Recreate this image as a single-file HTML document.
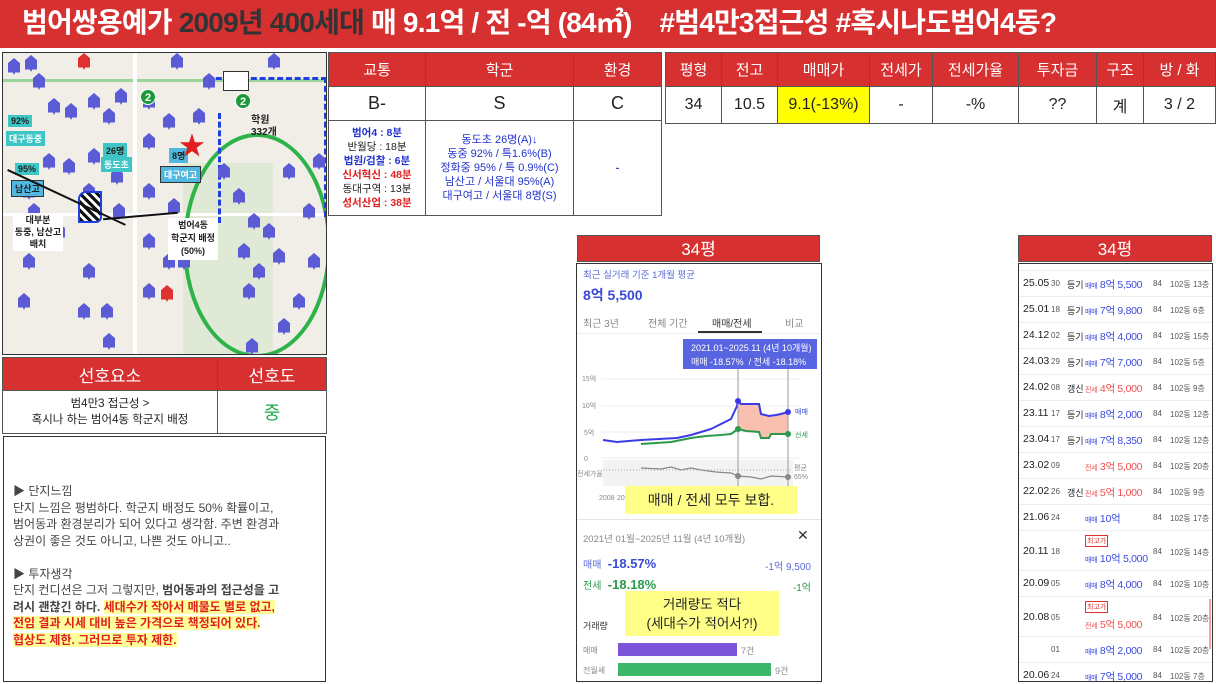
<!DOCTYPE html>
<html><head><meta charset="utf-8">
<style>
*{margin:0;padding:0;box-sizing:border-box}
body{width:1216px;height:684px;background:#fff;position:relative;overflow:hidden;font-family:"Liberation Sans","Noto Sans CJK KR",sans-serif;color:#222}
.a{position:absolute}
.hdr{left:0;top:0;width:1216px;height:48px;background:#d63031;color:#fff;font-weight:bold;font-size:28px;line-height:46px;padding-left:22px;letter-spacing:-0.8px;white-space:nowrap}
.red{background:#d63031;color:#fff;text-align:center}
table{border-collapse:collapse;position:absolute}
td{border:1px solid #555;text-align:center}
.mk{position:absolute;width:12px;height:17px;background:#5b5bd6;clip-path:polygon(0 30%,50% 0,100% 30%,100% 85%,60% 85%,50% 100%,40% 85%,0 85%)}
.lbl{position:absolute;font-size:9px;font-weight:bold;padding:1px 3px}
.rw{position:absolute;left:0;width:194px;border-top:1px solid #eee;font-size:10.5px;white-space:nowrap}
.rw span{position:absolute;white-space:nowrap}
.rw .p{font-size:10.5px;letter-spacing:-0.3px}
.rw .p small{font-size:7px}
.rw .n{font-size:8px;color:#555}
</style></head><body>
<div class="a hdr">범어쌍용예가 <span style="color:#333">2009년 400세대</span> 매 9.1억 / 전 -억 (84㎡) &nbsp;&nbsp;&nbsp;#범4만3접근성 #혹시나도범어4동?</div>

<div class="a" style="left:2px;top:52px;width:325px;height:303px;background:#f1eee8;border:1px solid #333;overflow:hidden">
<div class="a" style="left:180px;top:110px;width:90px;height:193px;background:#dfe9d5"></div>
<div class="a" style="left:0;top:26px;width:325px;height:3px;background:#9bd39b"></div>
<div class="a" style="left:130px;top:0;width:4px;height:303px;background:#fff"></div>
<div class="a" style="left:0;top:160px;width:325px;height:3px;background:#fff"></div>
<div class="a" style="left:180px;top:80px;width:148px;height:225px;border:4px solid #2db34a;border-radius:50%"></div>
<div class="a" style="left:204px;top:24px;width:120px;height:140px;border-top:3px dashed #1f3fe0;border-right:3px dashed #1f3fe0"></div>
<div class="a" style="left:215px;top:60px;width:70px;height:110px;border-left:3px dashed #1f3fe0"></div>
<div class="mk" style="left:5px;top:5px"></div><div class="mk" style="left:22px;top:2px"></div><div class="mk" style="left:30px;top:20px"></div><div class="mk" style="left:45px;top:45px"></div><div class="mk" style="left:62px;top:50px"></div><div class="mk" style="left:85px;top:40px"></div><div class="mk" style="left:100px;top:55px"></div><div class="mk" style="left:112px;top:35px"></div><div class="mk" style="left:140px;top:40px"></div><div class="mk" style="left:160px;top:60px"></div><div class="mk" style="left:190px;top:55px"></div><div class="mk" style="left:200px;top:20px"></div><div class="mk" style="left:265px;top:0"></div><div class="mk" style="left:168px;top:0"></div><div class="mk" style="left:40px;top:100px"></div><div class="mk" style="left:60px;top:105px"></div><div class="mk" style="left:85px;top:95px"></div><div class="mk" style="left:140px;top:80px"></div><div class="mk" style="left:108px;top:115px"></div><div class="mk" style="left:140px;top:130px"></div><div class="mk" style="left:20px;top:130px"></div><div class="mk" style="left:80px;top:130px"></div><div class="mk" style="left:25px;top:150px"></div><div class="mk" style="left:50px;top:170px"></div><div class="mk" style="left:110px;top:150px"></div><div class="mk" style="left:165px;top:145px"></div><div class="mk" style="left:230px;top:135px"></div><div class="mk" style="left:245px;top:160px"></div><div class="mk" style="left:280px;top:110px"></div><div class="mk" style="left:300px;top:150px"></div><div class="mk" style="left:310px;top:100px"></div><div class="mk" style="left:260px;top:170px"></div><div class="mk" style="left:270px;top:195px"></div><div class="mk" style="left:235px;top:190px"></div><div class="mk" style="left:140px;top:180px"></div><div class="mk" style="left:160px;top:200px"></div><div class="mk" style="left:140px;top:230px"></div><div class="mk" style="left:80px;top:210px"></div><div class="mk" style="left:75px;top:250px"></div><div class="mk" style="left:98px;top:250px"></div><div class="mk" style="left:100px;top:280px"></div><div class="mk" style="left:20px;top:200px"></div><div class="mk" style="left:15px;top:240px"></div><div class="mk" style="left:175px;top:200px"></div><div class="mk" style="left:240px;top:230px"></div><div class="mk" style="left:250px;top:210px"></div><div class="mk" style="left:290px;top:240px"></div><div class="mk" style="left:275px;top:265px"></div><div class="mk" style="left:243px;top:285px"></div><div class="mk" style="left:305px;top:200px"></div><div class="mk" style="left:195px;top:170px"></div><div class="mk" style="left:215px;top:110px"></div>
<div class="mk" style="left:158px;top:232px;background:#e03030"></div><div class="mk" style="left:75px;top:0;background:#e03030"></div>
<div class="lbl" style="left:5px;top:62px;background:#3ec6c6;color:#222">92%</div>
<div class="lbl" style="left:3px;top:78px;background:#3ec6c6;color:#fff">대구동중</div>
<div class="lbl" style="left:12px;top:110px;background:#3ec6c6;color:#222">95%</div>
<div class="lbl" style="left:8px;top:127px;background:#4fb7e0;color:#222;border:1px solid #333">남산고</div>
<div class="lbl" style="left:100px;top:90px;background:#3ec6c6;color:#222">26명</div>
<div class="lbl" style="left:98px;top:104px;background:#3ec6c6;color:#fff">동도초</div>
<div class="lbl" style="left:166px;top:95px;background:#4fb7e0;color:#222">8명</div>
<div class="lbl" style="left:157px;top:113px;background:#4fb7e0;color:#fff;border:1px solid #333">대구여고</div>
<div class="a" style="left:176px;top:80px;color:#e02020;font-size:26px;line-height:26px">★</div>
<div class="a" style="left:137px;top:36px;width:16px;height:16px;border-radius:50%;background:#1a9a3a;color:#fff;font-size:11px;font-weight:bold;text-align:center;line-height:16px;border:1px solid #fff">2</div>
<div class="a" style="left:232px;top:40px;width:16px;height:16px;border-radius:50%;background:#1a9a3a;color:#fff;font-size:11px;font-weight:bold;text-align:center;line-height:16px;border:1px solid #fff">2</div>
<div class="a" style="left:220px;top:18px;width:26px;height:20px;background:#fff;border:1px solid #333"></div>
<div class="a" style="left:248px;top:62px;font-size:10px;font-weight:bold;color:#222;line-height:12px">학원<br>332개</div>
<div class="a" style="left:75px;top:138px;width:24px;height:32px;background:repeating-linear-gradient(45deg,#111 0 3px,#fff 3px 6px);border:2px solid #1f3fe0;border-radius:8px 0 6px 0"></div>
<div class="a" style="left:5px;top:116px;width:130px;height:2px;background:#111;transform:rotate(25deg);transform-origin:0 0"></div>
<div class="a" style="left:100px;top:162px;width:75px;height:2px;background:#111;transform:rotate(-5deg)"></div>
<div class="a" style="left:10px;top:160px;width:50px;height:38px;background:#fff;font-size:9px;font-weight:bold;text-align:center;line-height:12px;padding-top:1px">대부분<br>동중, 남산고<br>배치</div>
<div class="a" style="left:165px;top:165px;width:50px;height:42px;background:#fff;font-size:9px;font-weight:bold;text-align:center;line-height:13px;padding-top:1px">범어4동<br>학군지 배정<br>(50%)</div>
</div>

<table style="left:328px;top:52px;width:334px">
<tr style="height:34px"><td class="red" style="width:97px;font-size:15px">교통</td><td class="red" style="width:148px;font-size:15px">학군</td><td class="red" style="font-size:15px">환경</td></tr>
<tr style="height:34px;font-size:18px"><td>B-</td><td>S</td><td>C</td></tr>
<tr style="height:95px;font-size:10.5px;line-height:14px;font-weight:bold"><td><span style="color:#2233cc">범어4 : 8분</span><br><span style="font-weight:normal">반월당 : 18분</span><br><span style="color:#2233cc">법원/검찰 : 6분</span><br><span style="color:#e02020">신서혁신 : 48분</span><br><span style="font-weight:normal">동대구역 : 13분</span><br><span style="color:#e02020">성서산업 : 38분</span></td>
<td style="color:#2233cc;font-weight:normal;font-size:11px">동도초 26명(A)↓<br>동중 92% / 특1.6%(B)<br>정화중 95% / 특 0.9%(C)<br>남산고 / 서울대 95%(A)<br>대구여고 / 서울대 8명(S)</td><td style="color:#2233cc">-</td></tr>
</table>

<table style="left:665px;top:52px;width:551px">
<tr style="height:34px;font-size:15px"><td class="red" style="width:56px">평형</td><td class="red" style="width:56px">전고</td><td class="red" style="width:92px">매매가</td><td class="red" style="width:63px">전세가</td><td class="red" style="width:86px">전세가율</td><td class="red" style="width:78px">투자금</td><td class="red" style="width:47px">구조</td><td class="red">방 / 화</td></tr>
<tr style="height:37px;font-size:16px"><td>34</td><td>10.5</td><td style="background:#ffff00">9.1(-13%)</td><td>-</td><td>-%</td><td>??</td><td>계</td><td>3 / 2</td></tr>
</table>

<table style="left:2px;top:357px;width:325px">
<tr style="height:33px;font-size:17px"><td class="red" style="width:215px">선호요소</td><td class="red">선호도</td></tr>
<tr style="height:43px"><td style="font-size:11.5px;line-height:16px">범4만3 접근성 &gt;<br>혹시나 하는 범어4동 학군지 배정</td><td style="color:#1fa84a;font-size:18px">중</td></tr>
</table>
<div class="a" style="left:3px;top:436px;width:323px;height:246px;border:1px solid #333;font-size:12px;line-height:16.5px;color:#444;padding:46px 0 0 9px">
▶ 단지느낌<br>단지 느낌은 평범하다. 학군지 배정도 50% 확률이고,<br>범어동과 환경분리가 되어 있다고 생각함. 주변 환경과<br>상권이 좋은 것도 아니고, 나쁜 것도 아니고..<br><br>▶ 투자생각<br>단지 컨디션은 그저 그렇지만, <b>범어동과의 접근성을 고<br>려시 괜찮긴 하다.</b> <b style="color:#e02020;background:#ffff99">세대수가 작아서 매물도 별로 없고,</b><br><b style="color:#e02020;background:#ffff99">전임 결과 시세 대비 높은 가격으로 책정되어 있다.</b><br><b style="color:#e02020;background:#ffff99">협상도 제한. 그러므로 투자 제한.</b>
</div>

<div class="a red" style="left:577px;top:235px;width:243px;height:27px;font-size:17px;line-height:27px;border:1px solid #555">34평</div>
<div class="a" style="left:576px;top:263px;width:246px;height:419px;border:1px solid #333;overflow:hidden">
<div class="a" style="left:6px;top:3px;font-size:9.5px;color:#5a6bd6">최근 실거래 기준 1개월 평균</div>
<div class="a" style="left:6px;top:21px;font-size:14px;font-weight:bold;color:#3a4bd8">8억 5,500</div>
<div class="a" style="left:6px;top:51px;font-size:10px;color:#888;width:235px"><span class="a" style="left:0">최근 3년</span><span class="a" style="left:65px">전체 기간</span><span class="a" style="left:129px;color:#333">매매/전세</span><span class="a" style="left:202px">비교</span></div>
<div class="a" style="left:121px;top:67px;width:64px;height:2px;background:#333"></div>
<div class="a" style="left:0;top:69px;width:246px;height:1px;background:#eee"></div>
<div class="a" style="left:106px;top:75px;width:134px;height:30px;background:#5865e0;color:#fff;font-size:9px;line-height:14px;padding:2px 0 0 8px">2021.01~2025.11 (4년 10개월)<br>매매 -18.57% &nbsp;/ 전세 -18.18%</div>
<svg class="a" style="left:0;top:0" width="246" height="419" viewBox="576 263 246 419">
<g font-size="7" fill="#888" font-family="Liberation Sans,Noto Sans CJK KR,sans-serif"><text x="581" y="380">15억</text><text x="581" y="407">10억</text><text x="583" y="434">5억</text><text x="583" y="460">0</text><text x="576" y="475">전세가율</text><text x="794" y="413" fill="#3a4bd8">매매</text><text x="794" y="436" fill="#2a9a4a">전세</text><text x="793" y="469">평균</text><text x="793" y="478">65%</text><text x="598" y="499">2008</text><text x="616" y="499">2010</text></g>
<g stroke="#eee"><line x1="600" y1="378" x2="800" y2="378"/><line x1="600" y1="405" x2="800" y2="405"/><line x1="600" y1="431" x2="800" y2="431"/><line x1="600" y1="457" x2="800" y2="457"/></g>
<rect x="602" y="459" width="190" height="26" fill="#f3f3f3"/>
<polygon points="737,400 740,403 758,403 760,413 768,415 775,414 787,411 787,433 770,433 768,437 760,437 758,431 745,430 737,428" fill="#f9c0b0"/>
<polyline points="602,439 616,441 640,439 676,437 690,434 700,431 710,428 720,423 730,418 736,405 737,400 740,403 758,403 760,413 768,415 775,414 780,413 787,411" fill="none" stroke="#3a3ae8" stroke-width="2"/>
<polyline points="640,443 670,441 690,437 705,435 720,434 730,433 737,428 745,430 758,431 760,437 768,437 770,433 787,433" fill="none" stroke="#2a9a4a" stroke-width="2"/>
<polyline points="640,467 660,468 670,466 680,469 690,467 700,469 715,471 730,472 737,475 750,476 760,478 770,475 787,476" fill="none" stroke="#888" stroke-width="1.2"/>
<line x1="602" y1="469" x2="790" y2="469" stroke="#aaa" stroke-dasharray="1,2"/>
<g stroke="#999"><line x1="737" y1="368" x2="737" y2="487"/><line x1="787" y1="368" x2="787" y2="487"/></g>
<circle cx="737" cy="400" r="3" fill="#3a3ae8"/><circle cx="787" cy="411" r="3" fill="#3a3ae8"/><circle cx="737" cy="428" r="3" fill="#2a9a4a"/><circle cx="787" cy="433" r="3" fill="#2a9a4a"/><circle cx="737" cy="475" r="3" fill="#888"/><circle cx="787" cy="476" r="3" fill="#888"/>
</svg>
<div class="a" style="left:48px;top:222px;width:172px;height:28px;background:#ffff88;font-size:14px;line-height:28px;text-align:center">매매 / 전세 모두 보합.</div>
<div class="a" style="left:0;top:255px;width:246px;height:1px;background:#e4e4e4"></div>
<div class="a" style="left:6px;top:267px;font-size:9.5px;color:#888">2021년 01월~2025년 11월 (4년 10개월)</div>
<div class="a" style="left:220px;top:263px;font-size:14px;color:#333">✕</div>
<div class="a" style="left:6px;top:292px;font-size:10px;color:#5a6bd6">매매 <b style="font-size:13px;color:#3a4bd8">&nbsp;-18.57%</b></div>
<div class="a" style="right:10px;top:294px;font-size:10px;color:#5a6bd6">-1억 9,500</div>
<div class="a" style="left:6px;top:313px;font-size:10px;color:#2a9a4a">전세 <b style="font-size:13px">&nbsp;-18.18%</b></div>
<div class="a" style="right:10px;top:315px;font-size:10px;color:#2a9a4a">-1억</div>
<div class="a" style="left:48px;top:327px;width:154px;height:45px;background:#ffff88;font-size:13.5px;line-height:19px;text-align:center;padding-top:4px">거래량도 적다<br>(세대수가 적어서?!)</div>
<div class="a" style="left:6px;top:355px;font-size:9px;color:#333">거래량</div>
<div class="a" style="left:6px;top:381px;font-size:8px;color:#888">매매</div>
<div class="a" style="left:41px;top:379px;width:119px;height:13px;background:#7b55d9"></div>
<div class="a" style="left:164px;top:380px;font-size:9px;color:#888">7건</div>
<div class="a" style="left:6px;top:401px;font-size:8px;color:#888">전월세</div>
<div class="a" style="left:41px;top:399px;width:153px;height:13px;background:#3db86a"></div>
<div class="a" style="left:198px;top:400px;font-size:9px;color:#888">9건</div>
</div>

<div class="a red" style="left:1018px;top:235px;width:194px;height:27px;font-size:17px;line-height:27px;border:1px solid #555">34평</div>
<div class="a" style="left:1018px;top:263px;width:195px;height:419px;border:1px solid #333;overflow:hidden">
<div class="rw" style="top:6px;height:26px"><span style="left:4px;top:6px">25.05</span><span class="n" style="left:32px;top:8px">30</span><span style="left:48px;top:7px;font-size:9px">등기</span><span class="p" style="left:66px;top:6px;color:#3a4be0"><small>매매</small> 8억 5,500</span><span class="n" style="left:134px;top:8px">84</span><span class="n" style="left:151px;top:8px">102동</span><span class="n" style="left:174px;top:8px">13층</span></div>
<div class="rw" style="top:32px;height:26px"><span style="left:4px;top:6px">25.01</span><span class="n" style="left:32px;top:8px">18</span><span style="left:48px;top:7px;font-size:9px">등기</span><span class="p" style="left:66px;top:6px;color:#3a4be0"><small>매매</small> 7억 9,800</span><span class="n" style="left:134px;top:8px">84</span><span class="n" style="left:151px;top:8px">102동</span><span class="n" style="left:174px;top:8px">6층</span></div>
<div class="rw" style="top:58px;height:26px"><span style="left:4px;top:6px">24.12</span><span class="n" style="left:32px;top:8px">02</span><span style="left:48px;top:7px;font-size:9px">등기</span><span class="p" style="left:66px;top:6px;color:#3a4be0"><small>매매</small> 8억 4,000</span><span class="n" style="left:134px;top:8px">84</span><span class="n" style="left:151px;top:8px">102동</span><span class="n" style="left:174px;top:8px">15층</span></div>
<div class="rw" style="top:84px;height:26px"><span style="left:4px;top:6px">24.03</span><span class="n" style="left:32px;top:8px">29</span><span style="left:48px;top:7px;font-size:9px">등기</span><span class="p" style="left:66px;top:6px;color:#3a4be0"><small>매매</small> 7억 7,000</span><span class="n" style="left:134px;top:8px">84</span><span class="n" style="left:151px;top:8px">102동</span><span class="n" style="left:174px;top:8px">5층</span></div>
<div class="rw" style="top:110px;height:26px"><span style="left:4px;top:6px">24.02</span><span class="n" style="left:32px;top:8px">08</span><span style="left:48px;top:7px;font-size:9px">갱신</span><span class="p" style="left:66px;top:6px;color:#f05050"><small>전세</small> 4억 5,000</span><span class="n" style="left:134px;top:8px">84</span><span class="n" style="left:151px;top:8px">102동</span><span class="n" style="left:174px;top:8px">9층</span></div>
<div class="rw" style="top:136px;height:26px"><span style="left:4px;top:6px">23.11</span><span class="n" style="left:32px;top:8px">17</span><span style="left:48px;top:7px;font-size:9px">등기</span><span class="p" style="left:66px;top:6px;color:#3a4be0"><small>매매</small> 8억 2,000</span><span class="n" style="left:134px;top:8px">84</span><span class="n" style="left:151px;top:8px">102동</span><span class="n" style="left:174px;top:8px">12층</span></div>
<div class="rw" style="top:162px;height:26px"><span style="left:4px;top:6px">23.04</span><span class="n" style="left:32px;top:8px">17</span><span style="left:48px;top:7px;font-size:9px">등기</span><span class="p" style="left:66px;top:6px;color:#3a4be0"><small>매매</small> 7억 8,350</span><span class="n" style="left:134px;top:8px">84</span><span class="n" style="left:151px;top:8px">102동</span><span class="n" style="left:174px;top:8px">12층</span></div>
<div class="rw" style="top:188px;height:26px"><span style="left:4px;top:6px">23.02</span><span class="n" style="left:32px;top:8px">09</span><span class="p" style="left:66px;top:6px;color:#f05050"><small>전세</small> 3억 5,000</span><span class="n" style="left:134px;top:8px">84</span><span class="n" style="left:151px;top:8px">102동</span><span class="n" style="left:174px;top:8px">20층</span></div>
<div class="rw" style="top:214px;height:26px"><span style="left:4px;top:6px">22.02</span><span class="n" style="left:32px;top:8px">26</span><span style="left:48px;top:7px;font-size:9px">갱신</span><span class="p" style="left:66px;top:6px;color:#f05050"><small>전세</small> 5억 1,000</span><span class="n" style="left:134px;top:8px">84</span><span class="n" style="left:151px;top:8px">102동</span><span class="n" style="left:174px;top:8px">9층</span></div>
<div class="rw" style="top:240px;height:26px"><span style="left:4px;top:6px">21.06</span><span class="n" style="left:32px;top:8px">24</span><span class="p" style="left:66px;top:6px;color:#3a4be0"><small>매매</small> 10억</span><span class="n" style="left:134px;top:8px">84</span><span class="n" style="left:151px;top:8px">102동</span><span class="n" style="left:174px;top:8px">17층</span></div>
<div class="rw" style="top:266px;height:40px"><span style="left:4px;top:14px">20.11</span><span class="n" style="left:32px;top:16px">18</span><span style="left:66px;top:4px;font-size:7px;color:#e03030;border:1px solid #e03030;padding:0 1px">최고가</span><span class="p" style="left:66px;top:20px;color:#3a4be0"><small>매매</small> 10억 5,000</span><span class="n" style="left:134px;top:16px">84</span><span class="n" style="left:151px;top:16px">102동</span><span class="n" style="left:174px;top:16px">14층</span></div>
<div class="rw" style="top:306px;height:26px"><span style="left:4px;top:6px">20.09</span><span class="n" style="left:32px;top:8px">05</span><span class="p" style="left:66px;top:6px;color:#3a4be0"><small>매매</small> 8억 4,000</span><span class="n" style="left:134px;top:8px">84</span><span class="n" style="left:151px;top:8px">102동</span><span class="n" style="left:174px;top:8px">10층</span></div>
<div class="rw" style="top:332px;height:40px"><span style="left:4px;top:14px">20.08</span><span class="n" style="left:32px;top:16px">05</span><span style="left:66px;top:4px;font-size:7px;color:#e03030;border:1px solid #e03030;padding:0 1px">최고가</span><span class="p" style="left:66px;top:20px;color:#f05050"><small>전세</small> 5억 5,000</span><span class="n" style="left:134px;top:16px">84</span><span class="n" style="left:151px;top:16px">102동</span><span class="n" style="left:174px;top:16px">20층</span></div>
<div class="rw" style="top:372px;height:26px"><span class="n" style="left:32px;top:8px">01</span><span class="p" style="left:66px;top:6px;color:#3a4be0"><small>매매</small> 8억 2,000</span><span class="n" style="left:134px;top:8px">84</span><span class="n" style="left:151px;top:8px">102동</span><span class="n" style="left:174px;top:8px">20층</span></div>
<div class="rw" style="top:398px;height:26px"><span style="left:4px;top:6px">20.06</span><span class="n" style="left:32px;top:8px">24</span><span class="p" style="left:66px;top:6px;color:#3a4be0"><small>매매</small> 7억 5,000</span><span class="n" style="left:134px;top:8px">84</span><span class="n" style="left:151px;top:8px">102동</span><span class="n" style="left:174px;top:8px">7층</span></div>
<div class="a" style="left:190px;top:335px;width:2px;height:50px;background:#f4a0a0"></div>
</div>
</body></html>
